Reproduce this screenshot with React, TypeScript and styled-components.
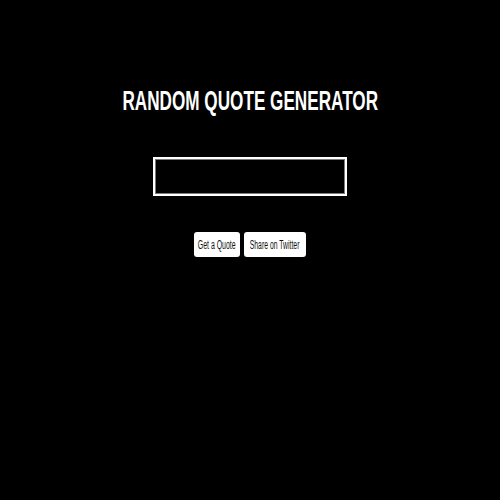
import React from 'react'
import styled, { createGlobalStyle } from 'styled-components'

const GlobalStyle = createGlobalStyle`
    html, body {
        margin: 0;
        padding: 0;
        background: #000;
    }
    body {
        font-family: "Liberation Sans", Arial, sans-serif;
    }
`

const Page = styled.main`
    width: 500px;
    height: 500px;
    background: #000;
    display: flex;
    flex-direction: column;
    align-items: center;
    padding-top: 86px;
    box-sizing: border-box;
`

const Title = styled.h1`
    margin: 0;
    font-size: 27px;
    line-height: 30px;
    font-weight: bold;
    color: #fff;
    white-space: nowrap;
`

// the whole shot looks squeezed sideways, so text is narrowed
const Squeeze = styled.span<{ $ratio: number }>`
    display: inline-block;
    white-space: nowrap;
    transform: scaleX(${p => p.$ratio});
    transform-origin: center;
`

const QuoteBox = styled.div`
    margin-top: 41px;
    width: 194px;
    height: 39px;
    box-sizing: border-box;
    border: 2px solid #fff;
    box-shadow: inset 0 0 0 1px #7a7a7a;
    background: #000;
`

const Actions = styled.div`
    margin-top: 36px;
    display: flex;
    gap: 4px;
`

const Button = styled.button<{ $width: number }>`
    width: ${p => p.$width}px;
    height: 25px;
    padding: 0;
    border: none;
    border-radius: 3px;
    background: #fff;
    color: #111;
    font-family: "Liberation Sans", Arial, sans-serif;
    font-size: 12px;
    display: flex;
    justify-content: center;
    align-items: center;
    overflow: visible;
    cursor: pointer;
`

const App = () => {
    return (
        <Page>
            <GlobalStyle />
            <Title>
                <Squeeze $ratio={0.635}>RANDOM QUOTE GENERATOR</Squeeze>
            </Title>
            <QuoteBox />
            <Actions>
                <Button $width={46}>
                    <Squeeze $ratio={0.58}>Get a Quote</Squeeze>
                </Button>
                <Button $width={62}>
                    <Squeeze $ratio={0.57}>Share on Twitter</Squeeze>
                </Button>
            </Actions>
        </Page>
    )
}

export default App
